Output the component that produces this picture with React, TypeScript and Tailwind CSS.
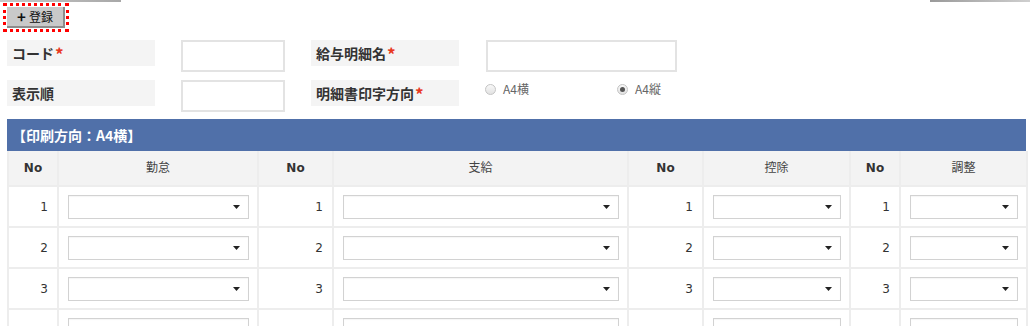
import React from "react"

const cols = [
  { label: "No", kind: "no" },
  { label: "勤怠", kind: "sel" },
  { label: "No", kind: "no" },
  { label: "支給", kind: "sel" },
  { label: "No", kind: "no" },
  { label: "控除", kind: "sel" },
  { label: "No", kind: "no" },
  { label: "調整", kind: "sel" },
]

const rows = [1, 2, 3, 4]

function Required() {
  return <span className="ml-[1px] text-[17px] font-bold leading-none text-[#e8381e]">*</span>
}

function Label({ children, req }: { children: React.ReactNode; req?: boolean }) {
  return (
    <div className="flex h-[26px] w-[148px] items-center bg-[#f4f4f4] pl-[5px] text-[14px] font-bold text-[#333]">
      {children}
      {req && <Required />}
    </div>
  )
}

function Radio({ checked, label }: { checked?: boolean; label: string }) {
  return (
    <label className="flex items-center gap-[7px] text-[12px] text-[#666]">
      <span className="flex h-[11px] w-[11px] items-center justify-center rounded-full border border-[#c4c4c4] bg-gradient-to-b from-[#f8f8f8] to-[#e2e2e2]">
        {checked && <span className="h-[5px] w-[5px] rounded-full bg-[#555]" />}
      </span>
      {label}
    </label>
  )
}

function SelectBox() {
  return (
    <div className="flex h-[24px] w-full items-center justify-end border border-[#d2d2d2] bg-white pr-[8px] shadow-[inset_0_1px_1px_rgba(0,0,0,0.04)]">
      <svg width="7" height="4" viewBox="0 0 7 4">
        <path d="M0 0h7L3.5 4z" fill="#222" />
      </svg>
    </div>
  )
}

export default function App() {
  return (
    <div
      className="h-[326px] w-[1030px] overflow-hidden bg-white"
      style={{ fontFamily: '"Noto Sans CJK JP", "DejaVu Sans", sans-serif' }}
    >
      {/* tab strip edge */}
      <div className="flex h-[2px] justify-between">
        <div className="w-[121px] bg-gradient-to-r from-[#c8c8c8] to-[#a8a8a8]" />
        <div className="w-[100px] bg-gradient-to-r from-[#9a9a9a] to-[#cfcfcf]" />
      </div>

      {/* register button */}
      <div className="ml-[3px] mt-[1px] inline-flex border-[3px] border-dotted border-[#ff0000] p-[1px]">
        <button className="flex h-[21px] w-[58px] items-center justify-center gap-[3px] border-b-2 border-r-2 border-[#8c8c8c] bg-[#c9c9c9] text-[12px] leading-none text-[#111]">
          <span className="text-[15px] font-bold leading-none">+</span>
          登録
        </button>
      </div>

      {/* form */}
      <div className="mt-[8px] flex flex-col gap-[8px] pl-[7px]">
        <div className="flex items-start">
          <Label req>コード</Label>
          <div className="ml-[26px] h-[32px] w-[104px] border-2 border-[#e3e3e3] bg-white" />
          <div className="ml-[26px]">
            <Label req>給与明細名</Label>
          </div>
          <div className="ml-[27px] h-[32px] w-[191px] border-2 border-[#e3e3e3] bg-white" />
        </div>
        <div className="flex items-start">
          <Label>表示順</Label>
          <div className="ml-[26px] h-[32px] w-[104px] border-2 border-[#e3e3e3] bg-white" />
          <div className="ml-[26px]">
            <Label req>明細書印字方向</Label>
          </div>
          <div className="ml-[26px] flex h-[18px] items-center">
            <div className="w-[132px]">
              <Radio label="A4横" />
            </div>
            <Radio checked label="A4縦" />
          </div>
        </div>
      </div>

      {/* table */}
      <div className="ml-[7px] mt-[7px] w-[1019px]">
        <div className="flex h-[32px] items-center bg-[#5070a9] pl-[5px] text-[14px] font-bold text-white">
          【印刷方向：A4横】
        </div>
        <div
          className="grid grid-cols-[50px_200px_75px_295px_75px_147px_50px_127px] border-l-2 border-[#ededed] text-[12px] text-[#333]"
          style={{ fontFamily: '"DejaVu Sans", "Noto Sans CJK JP", sans-serif' }}
        >
          {cols.map((c, i) => (
            <div
              key={"h" + i}
              className={`flex h-[36px] items-center justify-center border-b-2 border-r-2 border-[#ededed] bg-[#f3f3f3] ${
                c.kind === "no" ? "font-bold" : "text-[#444]"
              }`}
            >
              {c.label}
            </div>
          ))}
          {rows.map((r) =>
            cols.map((c, i) =>
              c.kind === "no" ? (
                <div
                  key={r + "-" + i}
                  className="flex h-[41px] items-center justify-end border-b-2 border-r-2 border-[#ededed] pr-[9px]"
                >
                  {r < 4 ? r : ""}
                </div>
              ) : (
                <div
                  key={r + "-" + i}
                  className="flex h-[41px] items-center border-b-2 border-r-2 border-[#ededed] pl-[9px] pr-[8px]"
                >
                  <SelectBox />
                </div>
              )
            )
          )}
        </div>
      </div>
    </div>
  )
}
